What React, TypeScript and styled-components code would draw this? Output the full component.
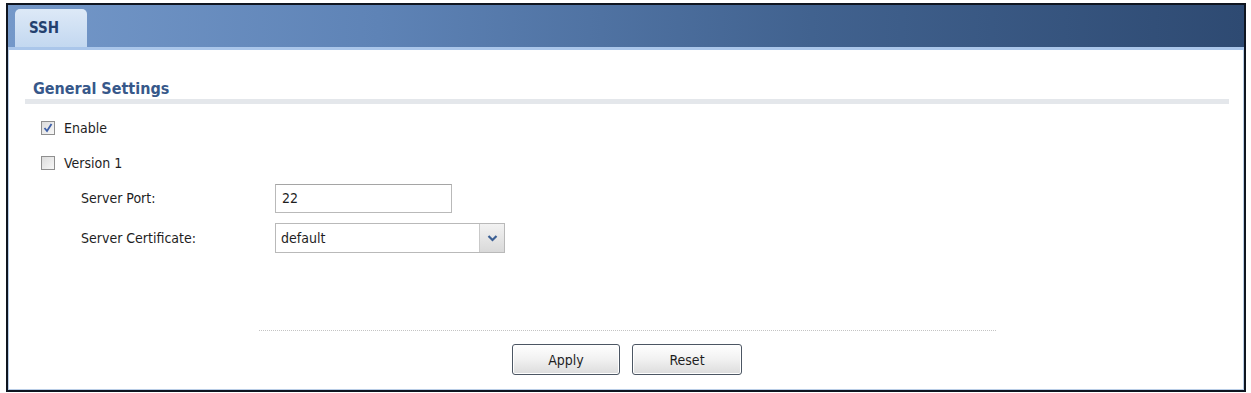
import * as React from "react";
import styled, { createGlobalStyle } from "styled-components";

const GlobalStyle = createGlobalStyle`
  html, body {
    margin: 0;
    padding: 0;
    background: #ffffff;
  }
  body {
    font-family: Tahoma, "DejaVu Sans Condensed", "DejaVu Sans", sans-serif;
    color: #1e1e1e;
  }
`;

const Frame = styled.div`
  box-sizing: border-box;
  margin: 3px 0 0 6px;
  width: 1240px;
  height: 389px;
  border: 2px solid #0f1520;
  background: #ffffff;
  display: flex;
  flex-direction: column;
  box-shadow: inset 0 0 0 1px #b9cde6;
`;

const TabBar = styled.div`
  height: 45px;
  padding: 0 0 0 7px;
  box-sizing: border-box;
  display: flex;
  align-items: flex-end;
  background: linear-gradient(90deg, #7498c9 0%, #5e83b6 30%, #41628f 65%, #2e4a72 100%);
  border-bottom: 3px solid #aac6ea;
`;

const Tab = styled.div`
  width: 72px;
  height: 38px;
  box-sizing: border-box;
  padding-left: 14px;
  display: flex;
  align-items: center;
  border-radius: 5px 5px 0 0;
  background: linear-gradient(180deg, #dde9f7 0%, #c3d8f0 100%);
  color: #23406e;
  font-weight: bold;
  font-size: 15px;
`;

const Body = styled.div`
  flex: 1;
  display: flex;
  flex-direction: column;
  padding: 30px 15px 0 17px;
`;

const SectionTitle = styled.div`
  font-size: 16px;
  font-weight: bold;
  color: #37588a;
  padding-left: 8px;
  line-height: 17px;
`;

const SectionRule = styled.div`
  height: 5px;
  margin-top: 2px;
  background: #e4e7eb;
`;

const Rows = styled.div`
  display: flex;
  flex-direction: column;
  padding: 6px 0 0 16px;
`;

const CheckRow = styled.label`
  display: flex;
  align-items: center;
  gap: 9px;
  height: 35px;
  font-size: 14px;
`;

const Box = styled.span<{ $checked?: boolean }>`
  box-sizing: border-box;
  width: 14px;
  height: 14px;
  border: 1px solid #8f8f8f;
  background: linear-gradient(135deg, #dcdcdc 0%, #f7f7f7 100%);
  display: flex;
  align-items: center;
  justify-content: center;
`;

const FieldRow = styled.div<{ $h: number }>`
  display: flex;
  align-items: center;
  height: ${p => p.$h}px;
  padding-left: 56px;
  font-size: 14px;
`;

const Label = styled.span`
  width: 194px;
`;

const TextInput = styled.div`
  box-sizing: border-box;
  width: 177px;
  height: 29px;
  border: 1px solid #b9b9b9;
  border-top-color: #a5a5a5;
  padding-left: 6px;
  display: flex;
  align-items: center;
  font-size: 14px;
`;

const Select = styled.div`
  box-sizing: border-box;
  width: 230px;
  height: 30px;
  border: 1px solid #b9b9b9;
  display: flex;
  align-items: stretch;
  font-size: 14px;
`;

const SelectValue = styled.span`
  flex: 1;
  display: flex;
  align-items: center;
  padding-left: 5px;
`;

const SelectArrow = styled.span`
  width: 24px;
  display: flex;
  align-items: center;
  justify-content: center;
  background: linear-gradient(180deg, #f2f2f2 0%, #d9d9d9 100%);
  border-left: 1px solid #c9c9c9;
`;

const Spacer = styled.div`
  flex: 1;
`;

const Footer = styled.div`
  display: flex;
  flex-direction: column;
  align-items: center;
  padding-bottom: 15px;
`;

const Dotted = styled.div`
  width: 737px;
  border-top: 1px dotted #c4c4c4;
  margin-bottom: 13px;
`;

const Buttons = styled.div`
  display: flex;
  gap: 12px;
`;

const Button = styled.button<{ $w: number }>`
  width: ${p => p.$w}px;
  height: 31px;
  border: 1px solid #4c5663;
  border-radius: 3px;
  background: linear-gradient(180deg, #ffffff 0%, #f1f1f1 50%, #dcdcdc 100%);
  font-family: inherit;
  font-size: 14px;
  color: #1e1e1e;
  box-shadow: inset 0 0 0 1px #ffffff;
`;

const Check = () => (
  <svg width="10" height="10" viewBox="0 0 10 10">
    <path d="M1.5 5 L4 8 L8.5 1" fill="none" stroke="#3d5fa8" strokeWidth="1.8" />
  </svg>
);

const Chevron = () => (
  <svg width="11" height="8" viewBox="0 0 11 8">
    <path d="M1.5 2 L5.5 6 L9.5 2" fill="none" stroke="#3b5f94" strokeWidth="2.2" />
  </svg>
);

export default function App() {
  return (
    <>
      <GlobalStyle />
      <Frame>
        <TabBar>
          <Tab>SSH</Tab>
        </TabBar>
        <Body>
          <SectionTitle>General Settings</SectionTitle>
          <SectionRule />
          <Rows>
            <CheckRow>
              <Box $checked>
                <Check />
              </Box>
              Enable
            </CheckRow>
            <CheckRow>
              <Box />
              Version 1
            </CheckRow>
          </Rows>
          <FieldRow $h={36}>
            <Label>Server Port:</Label>
            <TextInput>22</TextInput>
          </FieldRow>
          <FieldRow $h={44}>
            <Label>Server Certificate:</Label>
            <Select>
              <SelectValue>default</SelectValue>
              <SelectArrow>
                <Chevron />
              </SelectArrow>
            </Select>
          </FieldRow>
          <Spacer />
          <Footer>
            <Dotted />
            <Buttons>
              <Button $w={108}>Apply</Button>
              <Button $w={110}>Reset</Button>
            </Buttons>
          </Footer>
        </Body>
      </Frame>
    </>
  );
}
